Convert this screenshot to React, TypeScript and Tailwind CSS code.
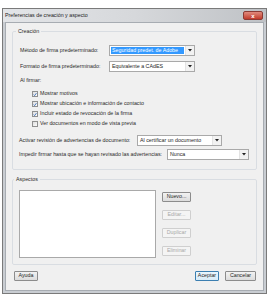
import React from "react";

function Combo({ value, width, selected }: { value: string; width: string; selected?: boolean }) {
  return (
    <div className={`flex h-[11px] items-stretch border border-[#a9a9a9] bg-white ${width}`}>
      <div className="flex flex-1 items-center p-[1px]">
        <span
          className={`flex h-full flex-1 items-center whitespace-nowrap px-[1px] ${
            selected ? "bg-[#3399ff] text-white" : "text-[#1e1e1e]"
          }`}
        >
          {value}
        </span>
      </div>
      <div className="flex w-[9px] items-center justify-center border-l border-[#e3e3e3] bg-[#f2f2f2]">
        <svg width="4" height="3" viewBox="0 0 4 3">
          <path d="M0 0 L4 0 L2 2.5 Z" fill="#222" />
        </svg>
      </div>
    </div>
  );
}

function Check({ label, checked }: { label: string; checked: boolean }) {
  return (
    <div className="flex h-[10px] items-center pl-[19px]">
      <div className="flex h-[6px] w-[6px] items-center justify-center border border-[#8f8f8f] bg-gradient-to-br from-[#dedede] to-[#fbfbfb]">
        {checked && (
          <svg width="5" height="5" viewBox="0 0 5 5">
            <path d="M0.8 2.6 L2 3.9 L4.3 0.8" stroke="#2a5fb0" strokeWidth="1" fill="none" />
          </svg>
        )}
      </div>
      <span className="ml-[2px] whitespace-nowrap">{label}</span>
    </div>
  );
}

function Btn({ label, width, disabled, def }: { label: string; width: string; disabled?: boolean; def?: boolean }) {
  return (
    <div
      className={`flex h-[10px] items-center justify-center rounded-[1px] border ${width} ${
        disabled
          ? "border-[#cfcfcf] bg-[#f4f4f4] text-[#a8a8a8]"
          : def
          ? "border-[#3c7fb1] bg-gradient-to-b from-[#eaf6fd] to-[#d9ecf8] text-[#1e1e1e]"
          : "border-[#8c8c8c] bg-gradient-to-b from-[#f2f2f2] to-[#dcdcdc] text-[#1e1e1e]"
      }`}
    >
      {label}
    </div>
  );
}

export default function App() {
  return (
    <div className="h-[300px] w-[269px] bg-white pl-[2px] pt-[8px] text-[5.3px] leading-none text-[#2a2a2a] [font-family:'Liberation_Sans',Arial,sans-serif]">
      <div className="flex h-[286px] w-[265px] flex-col border border-[#7a7a7a] bg-[#c9cdd2]">
        {/* title bar */}
        <div className="flex h-[13px] items-center justify-between bg-gradient-to-r from-[#e3e5e8] via-[#d6d8db] to-[#bfc2c6] pl-[2px] pr-[3px]">
          <span className="text-[#222]">Preferencias de creación y aspecto</span>
          <div className="flex h-[9px] w-[20px] items-center justify-center rounded-[2px] border border-[#8b3a34] bg-gradient-to-b from-[#e08a7d] to-[#c0392b] text-[6px] font-bold text-white">
            x
          </div>
        </div>

        {/* content */}
        <div className="mx-[2px] mb-[2px] flex flex-1 flex-col border border-[#a7acb2] bg-[#f0f0f0] px-[6px]">
          <fieldset className="mt-[4px] rounded-[2px] border border-[#d9dde2] px-0 pb-[9px]">
            <legend className="ml-[3px] px-[2px] leading-[8px]">Creación</legend>

            <div className="mt-[10px] flex h-[11px] items-center pl-[7px]">
              <span className="w-[89px] whitespace-nowrap">Método de firma predeterminado:</span>
              <Combo value="Seguridad predet. de Adobe" width="w-[86px]" selected />
            </div>
            <div className="mt-[5px] flex h-[11px] items-center pl-[7px]">
              <span className="w-[89px] whitespace-nowrap">Formato de firma predeterminado:</span>
              <Combo value="Equivalente a CAdES" width="w-[86px]" />
            </div>
            <div className="mt-[5px] flex h-[8px] items-center pl-[7px]">Al firmar:</div>

            <div className="mt-[4px] flex flex-col">
              <Check label="Mostrar motivos" checked />
              <Check label="Mostrar ubicación e información de contacto" checked />
              <Check label="Incluir estado de revocación de la firma" checked />
              <Check label="Ver documentos en modo de vista previa" checked={false} />
            </div>

            <div className="mt-[6px] flex h-[11px] items-center pl-[6px]">
              <span className="w-[118px] whitespace-nowrap">Activar revisión de advertencias de documento:</span>
              <Combo value="Al certificar un documento" width="w-[85px]" />
            </div>
            <div className="mt-[3px] flex h-[11px] items-center pl-[6px]">
              <span className="w-[148px] whitespace-nowrap">Impedir firmar hasta que se hayan revisado las advertencias:</span>
              <Combo value="Nunca" width="w-[82px]" />
            </div>
          </fieldset>

          <fieldset className="mt-[5px] rounded-[2px] border border-[#d9dde2] pb-[6px]">
            <legend className="ml-[1px] px-[2px] leading-[8px]">Aspectos</legend>
            <div className="mt-[7px] flex pl-[6px]">
              <div className="h-[68px] w-[137px] border border-[#a9a9a9] bg-white" />
              <div className="ml-[6px] mt-[2px] flex flex-col gap-[8px]">
                <Btn label="Nuevo..." width="w-[29px]" />
                <Btn label="Editar..." width="w-[29px]" disabled />
                <Btn label="Duplicar" width="w-[29px]" disabled />
                <Btn label="Eliminar" width="w-[29px]" disabled />
              </div>
            </div>
          </fieldset>

          <div className="mt-[6px] flex items-center justify-between pl-[2px] pr-[1px]">
            <Btn label="Ayuda" width="w-[24px]" />
            <div className="flex gap-[6px]">
              <Btn label="Aceptar" width="w-[24px]" def />
              <Btn label="Cancelar" width="w-[31px]" />
            </div>
          </div>
        </div>
      </div>
    </div>
  );
}
